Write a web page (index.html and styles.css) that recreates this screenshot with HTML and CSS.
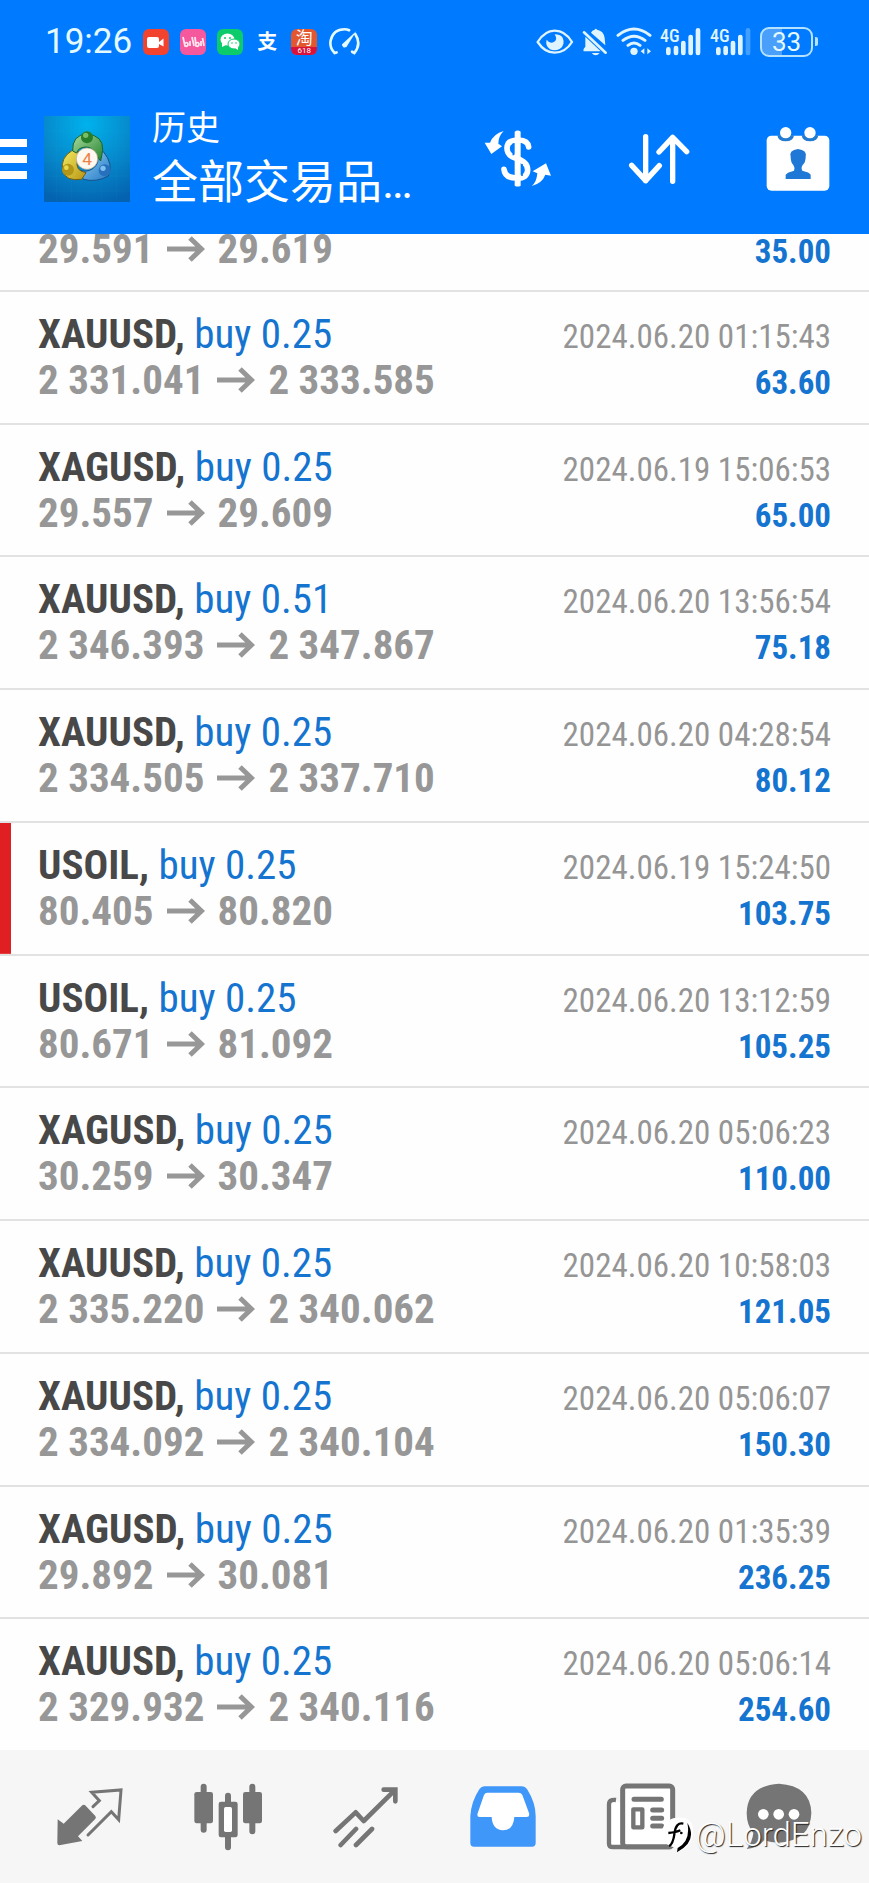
FILE: index.html
```html
<!DOCTYPE html>
<html lang="zh-CN">
<head>
<meta charset="utf-8">
<meta name="viewport" content="width=device-width, initial-scale=1">
<title>历史</title>
<link rel="stylesheet" href="styles.css">
</head>
<body>
<svg class="defs" aria-hidden="true">
  <symbol id="arrow" viewBox="0 0 38 26"><path d="M0 13H34M23 2L34.500 13L23 24" fill="none" stroke="currentColor" stroke-width="5"/></symbol>
</svg>
<header class="top">
  <div class="status">
    <div class="status-group">
      <span class="clock">19:26</span>
      <svg class="app-icon" viewBox="0 0 26 26"><rect width="26" height="26" rx="6" fill="#f2432f"/><rect x="4" y="8" width="12" height="11" rx="2" fill="#fff"/><path d="M16 13L20.500 9.500V17.500L16 15z" fill="#fff"/></svg>
      <svg class="app-icon" viewBox="0 0 26 26"><rect width="26" height="26" rx="6" fill="#f5589c"/><path d="M3 8L5 17Q8 18 8 15Q8 13 5 14M10 12V17M12 8L14 17M15 8L16 17Q19 18 19 15Q19 13 16 14M21 12V17M22.500 9L24 17" fill="none" stroke="#ffe4ee" stroke-width="1.800"/></svg>
      <svg class="app-icon" viewBox="0 0 26 26"><rect width="26" height="26" rx="6" fill="#0ccb6b"/><ellipse cx="10.500" cy="10.500" rx="7" ry="6" fill="#fff"/><path d="M5 14L5 18L9 16z" fill="#fff"/><ellipse cx="17" cy="15" rx="6" ry="5" fill="#fff" stroke="#0ccb6b"/><path d="M18 19L21 21L21 17z" fill="#fff"/><g fill="#0ccb6b"><circle cx="8" cy="9" r="1"/><circle cx="13" cy="9" r="1"/><circle cx="15" cy="14" r=".8"/><circle cx="19" cy="14" r=".8"/></g></svg>
      <span class="app-icon app-pay">支</span>
      <span class="app-icon app-shop"><span class="shop-name">淘</span><span class="shop-sale">618</span></span>
      <svg class="gauge" viewBox="980 82 100 86"><path d="M1006 158L1000 160Q984 144 988 122Q996 88 1030 88Q1038 88 1044 91M1063 103Q1082 132 1060 160L1053 156" fill="none" stroke="#e4faff" stroke-width="8" stroke-linecap="round"/><path d="M1066 93L1022 134Q1025 147 1036 142Z" fill="#e4faff"/></svg>
    </div>
    <div class="status-group status-right">
      <svg width="38" height="28" viewBox="314 84 114 84"><path d="M319 126Q340 92 370 92Q402 92 422 126Q402 158 370 158Q340 158 319 126Z" fill="none" stroke="#dff4ff" stroke-width="7"/><path d="M370 103Q381 121 366 127Q354 131 346 119Q341 137 356 148Q370 154 385 147Q403 134 394 113Q386 103 370 103Z" fill="#dff4ff"/></svg>
      <svg width="26" height="28" viewBox="453 82 78 84"><path d="M480 96Q483 88 491 87Q494 82 498 87Q518 90 521 112L523 134ZM463 108L509 152H458Q455 146 463 138ZM482 157H506Q494 171 482 157Z" fill="#dff4ff"/><path d="M459 95L524 156" stroke="#dff4ff" stroke-width="8" stroke-linecap="round"/></svg>
      <svg width="36" height="29" viewBox="556 79 108 87"><g fill="none" stroke="#dff4ff" stroke-width="9" stroke-linecap="round"><path d="M562 104Q610 66 658 104M577 119Q610 94 643 119M592 134Q610 120 628 134"/></g><circle cx="610" cy="152" r="11" fill="#dff4ff"/><path d="M641 143V161L630 152ZM650 143V161L661 152Z" fill="#dff4ff"/></svg>
      <svg width="42" height="36" viewBox="691 69 126 108" class="signal"><text x="691" y="122">4G</text><g stroke="#dff4ff" stroke-width="14" stroke-linecap="round"><path d="M716 145V156M739 141V156M761 126V156M783 108V156M805 88V156"/></g></svg>
      <svg width="42" height="36" viewBox="841 69 126 108" class="signal"><text x="841" y="122">4G</text><g stroke="#dff4ff" stroke-width="14" stroke-linecap="round"><path d="M866 145V156M888 141V156M910 126V156M932 108V156"/><path d="M955 88V156" opacity=".3"/></g></svg>
      <span class="battery">33</span>
    </div>
  </div>
  <div class="bar">
    <button class="icon-btn menu" aria-label="菜单"><i></i><i></i><i></i></button>
    <svg class="logo" viewBox="132 345 258 258" role="img" aria-label="MetaTrader 4">
      <defs>
        <radialGradient id="sky" cx=".5" cy=".1" r=".95"><stop offset="0" stop-color="#00b2ec"/><stop offset=".55" stop-color="#0688cb"/><stop offset="1" stop-color="#0462b0"/></radialGradient>
        <linearGradient id="gr" x2="1" y2="1"><stop stop-color="#a9dc9e"/><stop offset="1" stop-color="#24822f"/></linearGradient>
        <linearGradient id="ye" x2="1" y2="1"><stop stop-color="#f4ed62"/><stop offset="1" stop-color="#b89414"/></linearGradient>
        <linearGradient id="bl" x2="1" y2="1"><stop stop-color="#8fd2f5"/><stop offset="1" stop-color="#2678c4"/></linearGradient>
      </defs>
      <rect x="132" y="345" width="258" height="258" fill="url(#sky)"/>
      <path d="M132 390H390M132 435H390M132 480H390M132 525H390M132 570H390M170 345V603M215 345V603M305 345V603M350 345V603" stroke="#5cc" stroke-opacity=".15"/>
      <path d="M250 535Q290 545 325 525Q342 490 310 452L286 450Q305 485 278 503Q260 515 240 508Z" fill="url(#bl)" stroke="#14518b" stroke-width="3"/>
      <path d="M217 448Q180 470 188 510Q198 542 245 535L258 515Q225 510 232 478L235 450Z" fill="url(#ye)" stroke="#715d12" stroke-width="3"/>
      <path d="M218 450Q216 402 260 399Q310 403 308 448L302 480L285 458Q280 440 260 438Q235 438 230 456Z" fill="url(#gr)" stroke="#19642b" stroke-width="3"/>
      <circle cx="261" cy="409" r="18" fill="#287f2b"/><circle cx="257" cy="403" r="8" fill="#79bd65"/>
      <circle cx="204" cy="506" r="18" fill="#b39617"/><circle cx="199" cy="500" r="7" fill="#e8d94f"/>
      <circle cx="314" cy="508" r="18" fill="#2770bb"/><circle cx="309" cy="502" r="8" fill="#7ec0ef"/>
      <circle cx="261" cy="473" r="32" fill="#fdf8f0" stroke="#b9a78b" stroke-width="2"/>
      <text x="261" y="493" class="logo-num">4</text>
    </svg>
    <h1 class="title"><span class="title-sub">历史</span><span class="title-main">全部交易品…</span></h1>
    <div class="actions">
      <button class="icon-btn" aria-label="货币"><svg width="68" height="58" viewBox="160 388 204 174" fill="#fff"><path d="M294 439Q292 419 263 418Q229 418 229 443Q229 464 254 472Q291 482 291 508Q290 534 257 532Q222 532 220 506" fill="none" stroke="#fff" stroke-width="17" stroke-linecap="round"/><path d="M248 428V464M274 490V526" stroke="#007bff" stroke-width="5"/><path d="M252 393q9-7 18 0v162q-9 5-18 0z"/><path d="M219 391Q203 407 203 429L214 437L182 460L162 426L178 426Q189 399 219 391Z"/><path d="M303 556Q318 545 320 518L306 512L346 488L361 525L344 522Q335 547 303 556Z"/></svg></button>
      <button class="icon-btn" aria-label="排序"><svg width="62" height="52" viewBox="590 397 186 156" fill="none" stroke="#fff" stroke-width="16" stroke-linecap="round" stroke-linejoin="round"><path d="M643 408V540M601 494L643 540L684 495M724 542V410M683 454L724 410L766 453"/></svg></button>
      <button class="icon-btn" aria-label="日期"><svg width="64" height="66" viewBox="1006 372 192 198"><rect x="1008" y="401" width="188" height="165" rx="14" fill="#fff"/><g fill="#247bd0"><path d="M1040 400H1090Q1088 418 1065 418Q1042 418 1040 400ZM1113 400H1163Q1161 418 1138 418Q1115 418 1113 400Z"/></g><circle cx="1065" cy="392" r="17" fill="#fff"/><circle cx="1138" cy="392" r="17" fill="#fff"/><path d="M1065 531V518Q1070 511 1090 506Q1094 498 1088 489Q1080 481 1080 465Q1074 444 1102 441Q1130 444 1125 465Q1125 481 1116 489Q1110 498 1115 506Q1137 511 1140 518V531Z" fill="#1f78d6"/></svg></button>
    </div>
  </div>
</header>
<main class="history">
  <ul class="deals">
    <li class="deal deal-partial"><div><p class="price">29.591 <svg class="arrow"><use href="#arrow"/></svg> 29.619</p></div><div class="side"><p class="profit">35.00</p></div></li>
    <li class="deal"><div><p class="name"><b>XAUUSD,</b> buy 0.25</p><p class="price">2 331.041 <svg class="arrow"><use href="#arrow"/></svg> 2 333.585</p></div><div class="side"><time>2024.06.20 01:15:43</time><p class="profit">63.60</p></div></li>
    <li class="deal"><div><p class="name"><b>XAGUSD,</b> buy 0.25</p><p class="price">29.557 <svg class="arrow"><use href="#arrow"/></svg> 29.609</p></div><div class="side"><time>2024.06.19 15:06:53</time><p class="profit">65.00</p></div></li>
    <li class="deal"><div><p class="name"><b>XAUUSD,</b> buy 0.51</p><p class="price">2 346.393 <svg class="arrow"><use href="#arrow"/></svg> 2 347.867</p></div><div class="side"><time>2024.06.20 13:56:54</time><p class="profit">75.18</p></div></li>
    <li class="deal"><div><p class="name"><b>XAUUSD,</b> buy 0.25</p><p class="price">2 334.505 <svg class="arrow"><use href="#arrow"/></svg> 2 337.710</p></div><div class="side"><time>2024.06.20 04:28:54</time><p class="profit">80.12</p></div></li>
    <li class="deal deal-marked"><div><p class="name"><b>USOIL,</b> buy 0.25</p><p class="price">80.405 <svg class="arrow"><use href="#arrow"/></svg> 80.820</p></div><div class="side"><time>2024.06.19 15:24:50</time><p class="profit">103.75</p></div></li>
    <li class="deal"><div><p class="name"><b>USOIL,</b> buy 0.25</p><p class="price">80.671 <svg class="arrow"><use href="#arrow"/></svg> 81.092</p></div><div class="side"><time>2024.06.20 13:12:59</time><p class="profit">105.25</p></div></li>
    <li class="deal"><div><p class="name"><b>XAGUSD,</b> buy 0.25</p><p class="price">30.259 <svg class="arrow"><use href="#arrow"/></svg> 30.347</p></div><div class="side"><time>2024.06.20 05:06:23</time><p class="profit">110.00</p></div></li>
    <li class="deal"><div><p class="name"><b>XAUUSD,</b> buy 0.25</p><p class="price">2 335.220 <svg class="arrow"><use href="#arrow"/></svg> 2 340.062</p></div><div class="side"><time>2024.06.20 10:58:03</time><p class="profit">121.05</p></div></li>
    <li class="deal"><div><p class="name"><b>XAUUSD,</b> buy 0.25</p><p class="price">2 334.092 <svg class="arrow"><use href="#arrow"/></svg> 2 340.104</p></div><div class="side"><time>2024.06.20 05:06:07</time><p class="profit">150.30</p></div></li>
    <li class="deal"><div><p class="name"><b>XAGUSD,</b> buy 0.25</p><p class="price">29.892 <svg class="arrow"><use href="#arrow"/></svg> 30.081</p></div><div class="side"><time>2024.06.20 01:35:39</time><p class="profit">236.25</p></div></li>
    <li class="deal"><div><p class="name"><b>XAUUSD,</b> buy 0.25</p><p class="price">2 329.932 <svg class="arrow"><use href="#arrow"/></svg> 2 340.116</p></div><div class="side"><time>2024.06.20 05:06:14</time><p class="profit">254.60</p></div></li>
  </ul>
</main>
<nav class="tabs">
  <button class="icon-btn" aria-label="行情"><svg width="68" height="60" viewBox="170 140 204 180"><path d="M175 237L193 250L249 195Q254 191 259 196L288 227Q292 232 287 237L236 288L249 302L180 315Q174 315 174 308Z" fill="#757575"/><path d="M281 199L300 181L277 156L365 149L358 238L336 214L266 284" fill="none" stroke="#757575" stroke-width="9" stroke-linecap="round"/></svg></button>
  <button class="icon-btn" aria-label="图表"><svg width="68" height="68" viewBox="581 126 204 204"><g stroke="#757575" stroke-width="18" stroke-linecap="round"><path d="M610 137V266M756 137V271M683 164V190M683 285V319"/></g><g fill="#757575"><rect x="582" y="153" width="56" height="94" rx="7"/><rect x="728" y="153" width="57" height="94" rx="7"/><rect x="655" y="182" width="57" height="107" rx="7"/></g><rect x="671" y="198" width="24" height="75" rx="5" fill="#fff"/></svg></button>
  <button class="icon-btn" aria-label="交易"><svg width="66" height="62" viewBox="998 133 198 186"><path d="M1006 268L1066 212L1090 238L1182 147M1021 310L1067 262M1067 310L1115 262" fill="none" stroke="#757575" stroke-width="14" stroke-linecap="round" stroke-linejoin="round"/><path d="M1150 144H1185V179" fill="none" stroke="#757575" stroke-width="14" stroke-linecap="round"/></svg></button>
  <button class="icon-btn" aria-label="历史" aria-current="page"><svg width="66" height="62" viewBox="122 134 198 186"><path d="M165 135H278Q288 135 293 143Q319 184 319 224V305Q319 316 308 316H134Q123 316 123 305V224Q126 180 150 144Q156 135 165 135Z" fill="#4097fa"/><path d="M174 154H268Q275 154 279 161L299 215Q302 227 292 227H255Q252 267 221 267Q189 265 187 227H150Q142 226 145 216L164 161Q167 154 174 154Z" fill="#fff"/></svg></button>
  <button class="icon-btn" aria-label="新闻"><svg width="70" height="68" viewBox="534 125 210 204"><path d="M564 176Q543 173 543 190V307Q543 317 555 317H730" fill="#fff" stroke="#757575" stroke-width="13"/><rect x="584" y="134" width="150" height="182" rx="10" fill="#fff" stroke="#757575" stroke-width="15"/><path d="M618 174H700M674 206H701M674 231H701M674 254H701" stroke="#757575" stroke-width="15" stroke-linecap="round"/><rect x="616" y="204" width="27" height="54" fill="#fff" stroke="#757575" stroke-width="13" stroke-linejoin="round"/></svg></button>
  <button class="icon-btn" aria-label="消息"><svg width="66" height="68" viewBox="941 126 198 204"><path d="M943 324Q960 304 963 276Q943 252 943 216Q945 134 1040 128Q1135 134 1137 216Q1135 298 1040 305Q1015 305 995 298Q978 320 943 324Z" fill="#757575"/><g fill="#fff"><circle cx="993" cy="220" r="16"/><circle cx="1039" cy="220" r="16"/><circle cx="1085" cy="220" r="16"/></g></svg></button>
  <div class="credit"><svg width="34" height="38" viewBox="688 230 102 114"><path d="M735 235Q790 232 784 282Q783 320 738 340L739 325Q700 325 691 288Q690 240 735 235Z" fill="#fff"/><path d="M767 250Q800 305 736 339L738 326Q778 305 767 250Z"/><path d="M712 320Q724 316 729 280Q733 248 755 253M710 281Q735 279 746 273" fill="none" stroke="#000" stroke-width="7"/><circle cx="749" cy="281" r="4"/></svg><span>@LordEnzo</span></div>
</nav>
</body>
</html>
```
FILE: styles.css
```css
* { box-sizing: border-box; }

body {
  margin: 0;
  min-height: 100vh;
  display: flex;
  flex-direction: column;
  background: #fefefe;
  font-family: "Roboto Condensed", "Liberation Sans Narrow", Roboto, "Noto Sans CJK SC", sans-serif;
}

p, h1, ul { margin: 0; padding: 0; }
svg { display: block; flex: none; }
.defs { position: absolute; width: 0; height: 0; }

.icon-btn {
  display: flex;
  padding: 0;
  border: 0;
  background: none;
}

/* Header */
.top {
  background: #007bff;
  color: #fff;
  font-family: Roboto, "Noto Sans CJK SC", sans-serif;
}
.status {
  display: flex;
  justify-content: space-between;
  align-items: center;
  height: 83px;
  padding: 0 56px 0 45px;
}
.status-group { display: flex; align-items: center; gap: 11px; }
.status-right { gap: 8px; }
.clock { font-size: 35px; line-height: 40px; color: #e4faff; }
.app-icon { width: 26px; height: 26px; flex: none; }
.app-pay { font-size: 20px; line-height: 26px; font-weight: 700; text-align: center; }
.app-shop {
  display: flex;
  flex-direction: column;
  border-radius: 6px;
  overflow: hidden;
  background: #e2572f;
  text-align: center;
}
.shop-name { font-size: 17px; line-height: 18px; }
.shop-sale { font-size: 8px; line-height: 8px; background: #d9123c; }
.gauge { width: 33px; height: 29px; }
.signal text { font-size: 54px; font-weight: 500; fill: #dff4ff; font-family: "Roboto Condensed", "Liberation Sans Narrow", Roboto, sans-serif; }
.battery {
  position: relative;
  width: 53px;
  height: 30px;
  border: 2px solid #b5e2ff;
  border-radius: 9px;
  background: linear-gradient(to right, #4a9ffb 40%, transparent 40%);
  font-size: 26px;
  line-height: 26px;
  text-align: center;
  color: #e4faff;
}
.battery::after {
  content: "";
  position: absolute;
  right: -7px;
  top: 8px;
  width: 3px;
  height: 9px;
  border-radius: 0 2px 2px 0;
  background: #b5e2ff;
}

.bar {
  display: flex;
  align-items: center;
  height: 151px;
  padding-right: 39px;
}
.menu { flex-direction: column; gap: 8px; width: 27px; margin-right: 17px; }
.menu i { width: 100%; height: 8px; background: #fff; }
.logo { width: 86px; height: 86px; }
.logo-num { font-size: 52px; text-anchor: middle; fill: #ee8244; font-family: Roboto, sans-serif; }
.title { display: flex; flex-direction: column; margin-left: 22px; font-weight: 400; }
.title-sub { font-size: 34px; line-height: 46px; }
.title-main { font-size: 46px; line-height: 62px; white-space: nowrap; }
.actions { display: flex; align-items: center; gap: 76px; margin-left: auto; }

/* Deals */
.history { flex: 1; display: flex; flex-direction: column; }
.deals {
  flex: 1;
  display: grid;
  grid-template-rows: 56px;
  grid-auto-rows: 1fr;
  list-style: none;
}
.deal {
  display: flex;
  justify-content: space-between;
  align-items: baseline;
  padding: 19px 38px 12px;
  border-top: 2px solid #e2e2e2;
  line-height: 46px;
  white-space: nowrap;
}
.deal-partial { padding-top: 0; border-top: 0; line-height: 30px; }
.deal-marked {
  background: linear-gradient(#e01f22, #e01f22) left / 11px 100% no-repeat;
}
.name { font-size: 41px; color: #1474cf; }
.name b { color: #484848; }
.price { display: flex; align-items: center; gap: 13px; font-size: 41px; font-weight: 700; color: #979797; }
.arrow { width: 38px; height: 26px; }
.side { text-align: right; font-size: 33px; }
.side time { display: block; color: #959595; }
.profit { font-weight: 700; color: #1474cf; }

/* Bottom tabs */
.tabs {
  position: relative;
  display: grid;
  grid-template-columns: repeat(6, 1fr);
  align-items: center;
  justify-items: center;
  height: 133px;
  padding: 0 21px;
  background: #f6f6f6;
}
.credit {
  position: absolute;
  right: 7px;
  bottom: 28px;
  display: flex;
  align-items: center;
  gap: 1px;
  font: 300 33px/40px Roboto, sans-serif;
  color: #fff;
  text-shadow: 1px 1px 1px #222;
}
```
